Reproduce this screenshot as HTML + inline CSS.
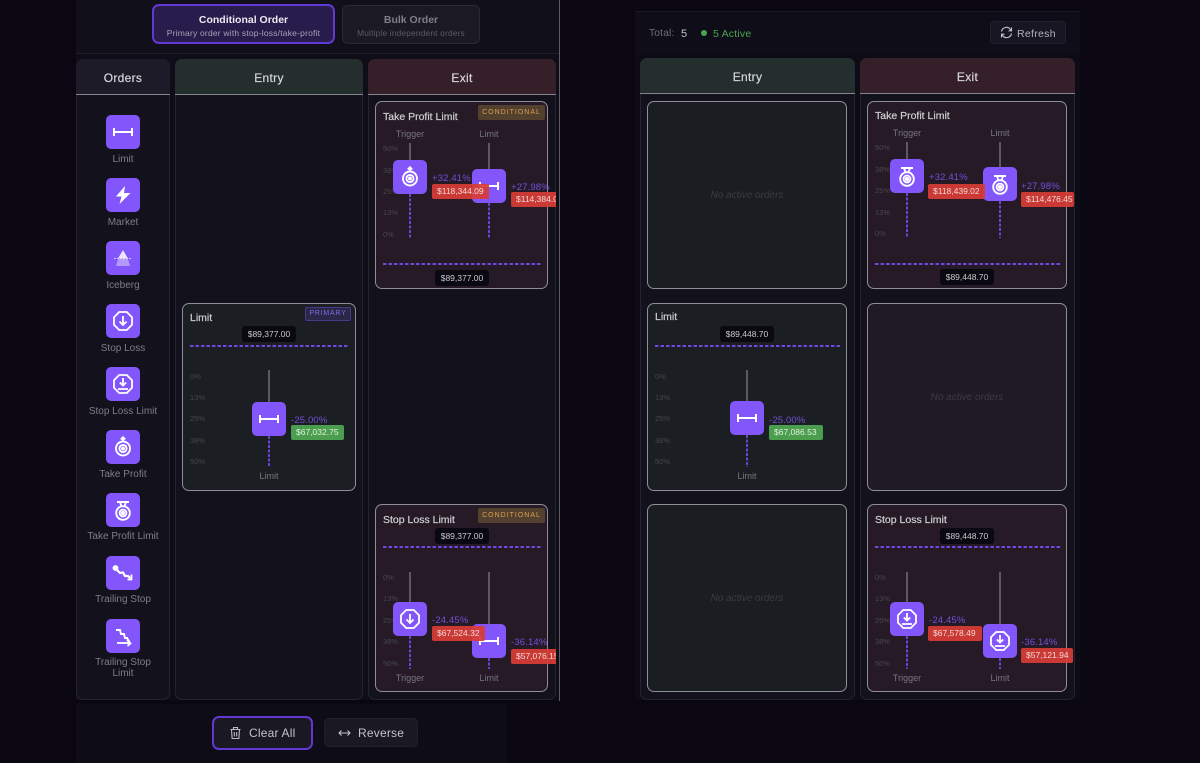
<!DOCTYPE html>
<html><head><meta charset="utf-8"><style>
html,body{margin:0;padding:0;width:1200px;height:763px;overflow:hidden;background:#0a0712;font-family:"Liberation Sans",sans-serif}
div,span,svg{position:absolute;box-sizing:border-box}
.t{white-space:nowrap;height:12px;line-height:12px;margin-top:1px}
.c{text-align:center}
.col{background:#13121c;border:1px solid #24232e;border-radius:7px}
.hd{height:36px;border-radius:7px 7px 0 0;border-bottom:1px solid #85848c;color:#d6d6da;font-size:12px;line-height:38px;text-align:center;letter-spacing:.3px;-webkit-text-stroke:.2px #d6d6da}
.card{border:1px solid #8f8e96;border-radius:7px}
.en{background:#1b1e22}.ex{background:#251a26}.ee{background:#1a1d21}.xe{background:#1f1a24}
.t.ti{color:#cfcfd3;font-size:10.500px;-webkit-text-stroke:.2px #cfcfd3;margin-top:2px}
.lb{color:#77767e;font-size:9px;text-align:center;width:60px}
.ax{color:#47474e;font-size:7.5px}
.t.ol{color:#7f7e87;font-size:10px;text-align:center;left:76px;width:94px;margin-top:2px}
.ib{width:34px;height:34px;background:#8256fa;border-radius:5px}
.ib svg{left:0;top:0;width:34px;height:34px}
.s{width:2px;background:#5a5960}
.d{width:2px;background:repeating-linear-gradient(180deg,#6a44d4 0 3px,transparent 3px 4.5px)}
.h{height:2px;background:repeating-linear-gradient(90deg,#6f49de 0 3.5px,transparent 3.5px 5.5px)}
.pill{width:54px;height:16px;background:#0a0810;border-radius:3px;color:#c9c9ce;font-size:8.5px;line-height:16px;text-align:center}
.pct{color:#7350d8;font-size:9.500px;letter-spacing:.15px}
.r,.g{height:15px;border-radius:2px;color:#efd9d6;font-size:8.5px;line-height:15px;padding-left:5px;white-space:nowrap;overflow:hidden}
.r{background:rgba(216,60,54,.93)}.g{background:#4a9e4d;color:#e2f0e2}
.cond{width:67px;height:15px;background:#54402f;border-radius:2px;color:#d9a04f;font-size:7px;line-height:15px;text-align:center;letter-spacing:1px}
.t.no{color:#3c3b43;font-size:10px;font-style:italic;text-align:center;margin-top:2px}
</style></head><body>
<svg width="0" height="0" style="left:0;top:0"><defs>
<g id="lim" fill="none" stroke="#fff" stroke-width="2"><path d="M8 17H26M8 13V21M26 13V21"/></g>
<g id="mkt" fill="#fff"><path d="M19 8 L10 18.5 H15.5 L13.5 26 L24.5 15 H18 Z"/></g>
<g id="ice"><path d="M17 9L22 17.5H12Z" fill="#fff" opacity=".85"/><path d="M8 17.5H26" stroke="#fff" stroke-width="1" stroke-dasharray="2 1" opacity=".7"/><path d="M12 18H22L24 25H10Z" fill="#fff" opacity=".4"/></g>
<g id="sl" fill="none" stroke="#fff" stroke-width="1.8"><path d="M13.200 8H20.800L26 13.200V20.800L20.800 26H13.200L8 20.800V13.200Z"/><path d="M17 12V21M13.500 17.500L17 21L20.500 17.500"/></g>
<g id="sll" fill="none" stroke="#fff" stroke-width="1.8"><path d="M13.200 8H20.800L26 13.200V20.800L20.800 26H13.200L8 20.800V13.200Z"/><path d="M17 11V18.500M13.800 15.500L17 18.500L20.200 15.500M12 22H22"/></g>
<g id="tp" fill="none" stroke="#fff" stroke-width="1.900"><circle cx="17" cy="18.500" r="7"/><circle cx="17" cy="18.500" r="3.600"/><circle cx="17" cy="18.500" r="1" fill="#fff"/><path d="M17 11.500V7.500M14.800 9.500L17 7.200L19.200 9.500"/></g>
<g id="tpl" fill="none" stroke="#fff" stroke-width="1.900"><circle cx="17" cy="20" r="6.800"/><circle cx="17" cy="20" r="3.400"/><circle cx="17" cy="20" r="1.200" fill="#fff"/><path d="M11 9H23M14 9L15.500 13.500M20 9L18.500 13.500"/></g>
<g id="ts" fill="none" stroke="#fff" stroke-width="2.200"><circle cx="9.500" cy="12" r="1.800" fill="#fff"/><path d="M10 13L14 17L17 16.500L19 20L22 20L25 23"/><path d="M25.500 18.500V23.500H21.500" stroke-width="1.800"/></g>
<g id="tsl" fill="none" stroke="#fff" stroke-width="1.900"><path d="M10 11H14L15 15H18L19 19H21L24 24"/><path d="M11 24H24M21 21L24.500 24.500L21.500 27" stroke-width="1.700"/></g>
<g id="trash" fill="none" stroke="#bdbcc2" stroke-width="1.100"><path d="M1 3.500H11M4 3.500V1.500H8V3.500M2 3.500L2.600 12.500H9.400L10 3.500M4.800 6V10.500M7.200 6V10.500"/></g>
<g id="ref" fill="none" stroke="#c5c4ca" stroke-width="1.100"><path d="M1.500 5.500A5 5 0 0 1 10.500 3.500L11.500 4.800M11.500 1.500V4.800H8.500M11.500 7.500A5 5 0 0 1 2.500 9.500L1.500 8.200M1.500 11.500V8.200H4.500"/></g>
<g id="rev" fill="none" stroke="#c4c3c9" stroke-width="1.100"><path d="M1 4H12M3.500 1.500L1 4L3.500 6.500M9.500 1.500L12 4L9.500 6.500"/></g>
</defs></svg>

<!-- left panel -->
<div style="left:76px;top:0;width:483px;height:700px;background:#0f0e18"></div>
<div style="left:76px;top:0;width:483px;height:54px;background:#100f1a;border-bottom:1px solid #1e1d28"></div>
<div style="left:559px;top:0;width:1px;height:701px;background:#5d5c63"></div>
<div style="left:152px;top:4px;width:183px;height:40px;background:#281c4c;border:2px solid #6238d4;border-radius:7px"></div>
<div class="t c" style="left:152px;top:13px;width:183px;color:#ecebf2;font-size:10.500px;font-weight:bold">Conditional Order</div>
<div class="t c" style="left:152px;top:26px;width:183px;color:#a6a3b4;font-size:8.500px;letter-spacing:.2px">Primary order with stop-loss/take-profit</div>
<div style="left:342px;top:5px;width:138px;height:39px;background:#1a1924;border:1px solid #2a2934;border-radius:6px"></div>
<div class="t c" style="left:342px;top:13px;width:138px;color:#807f88;font-size:10.500px;font-weight:bold">Bulk Order</div>
<div class="t c" style="left:342px;top:26px;width:138px;color:#5d5c66;font-size:8.300px;letter-spacing:.2px">Multiple independent orders</div>

<!-- Orders column -->
<div class="col" style="left:76px;top:59px;width:94px;height:641px"><div class="hd" style="left:-1px;top:-1px;width:94px;background:#1d1b28">Orders</div></div>
<div class="ib" style="left:106px;top:115px"><svg viewBox="0 0 34 34"><use href="#lim"/></svg></div><div class="t ol" style="top:152px">Limit</div>
<div class="ib" style="left:106px;top:178px"><svg viewBox="0 0 34 34"><use href="#mkt"/></svg></div><div class="t ol" style="top:215px">Market</div>
<div class="ib" style="left:106px;top:241px"><svg viewBox="0 0 34 34"><use href="#ice"/></svg></div><div class="t ol" style="top:278px">Iceberg</div>
<div class="ib" style="left:106px;top:304px"><svg viewBox="0 0 34 34"><use href="#sl"/></svg></div><div class="t ol" style="top:341px">Stop Loss</div>
<div class="ib" style="left:106px;top:367px"><svg viewBox="0 0 34 34"><use href="#sll"/></svg></div><div class="t ol" style="top:404px">Stop Loss Limit</div>
<div class="ib" style="left:106px;top:430px"><svg viewBox="0 0 34 34"><use href="#tp"/></svg></div><div class="t ol" style="top:467px">Take Profit</div>
<div class="ib" style="left:106px;top:493px"><svg viewBox="0 0 34 34"><use href="#tpl"/></svg></div><div class="t ol" style="top:529px">Take Profit Limit</div>
<div class="ib" style="left:106px;top:556px"><svg viewBox="0 0 34 34"><use href="#ts"/></svg></div><div class="t ol" style="top:592px">Trailing Stop</div>
<div class="ib" style="left:106px;top:619px"><svg viewBox="0 0 34 34"><use href="#tsl"/></svg></div><div class="t ol" style="top:655px">Trailing Stop</div><div class="t ol" style="top:666px">Limit</div>

<!-- Left Entry -->
<div class="col" style="left:175px;top:59px;width:188px;height:641px"><div class="hd" style="left:-1px;top:-1px;width:188px;background:#242e2c">Entry</div></div>
<div class="card en" style="left:182px;top:303px;width:174px;height:188px"></div>
<div class="t ti" style="left:190px;top:310px">Limit</div>
<div style="left:305px;top:307px;width:46px;height:14px;background:#2b2748;border:1px solid #443a88;border-radius:2px;color:#7c6ee8;font-size:7px;line-height:12px;text-align:center;letter-spacing:.8px">PRIMARY</div>
<div class="pill" style="left:242px;top:326px">$89,377.00</div>
<div class="h" style="left:190px;top:345px;width:159px"></div>
<div class="t ax" style="left:190px;top:370px">0%</div><div class="t ax" style="left:190px;top:391px">13%</div><div class="t ax" style="left:190px;top:412px">25%</div><div class="t ax" style="left:190px;top:434px">38%</div><div class="t ax" style="left:190px;top:455px">50%</div>
<div class="s" style="left:268px;top:370px;height:32px"></div><div class="d" style="left:268px;top:436px;height:31px"></div>
<div class="ib" style="left:252px;top:402px"><svg viewBox="0 0 34 34"><use href="#lim"/></svg></div>
<div class="t pct" style="left:291px;top:414px">-25.00%</div><div class="g" style="left:291px;top:425px;width:53px">$67,032.75</div>
<div class="t lb" style="left:239px;top:469px">Limit</div>

<!-- Left Exit -->
<div class="col" style="left:368px;top:59px;width:188px;height:641px"><div class="hd" style="left:-1px;top:-1px;width:188px;background:#35202a">Exit</div></div>
<div class="card ex" style="left:375px;top:101px;width:173px;height:188px"></div>
<div class="t ti" style="left:383px;top:109px">Take Profit Limit</div>
<div class="cond" style="left:478px;top:105px">CONDITIONAL</div>
<div class="t lb" style="left:380px;top:127px">Trigger</div><div class="t lb" style="left:459px;top:127px">Limit</div>
<div class="t ax" style="left:383px;top:142px">50%</div><div class="t ax" style="left:383px;top:164px">38%</div><div class="t ax" style="left:383px;top:185px">25%</div><div class="t ax" style="left:383px;top:206px">13%</div><div class="t ax" style="left:383px;top:228px">0%</div>
<div class="s" style="left:409px;top:143px;height:18px"></div><div class="d" style="left:409px;top:194px;height:45px"></div>
<div class="ib" style="left:393px;top:160px"><svg viewBox="0 0 34 34"><use href="#tp"/></svg></div>
<div class="s" style="left:488px;top:143px;height:26px"></div><div class="d" style="left:488px;top:203px;height:36px"></div>
<div class="ib" style="left:472px;top:168.500px"><svg viewBox="0 0 34 34"><use href="#lim"/></svg></div>
<div class="t pct" style="left:432px;top:172px">+32.41%</div><div class="r" style="left:432px;top:184px;width:57px">$118,344.09</div>
<div class="t pct" style="left:511px;top:181px">+27.98%</div><div class="r" style="left:511px;top:192px;width:45px;border-radius:2px 0 0 2px">$114,384.09</div>
<div class="h" style="left:383px;top:263px;width:159px"></div>
<div class="pill" style="left:435px;top:270px">$89,377.00</div>

<div class="card ex" style="left:375px;top:504px;width:173px;height:188px"></div>
<div class="t ti" style="left:383px;top:512px">Stop Loss Limit</div>
<div class="cond" style="left:478px;top:508px">CONDITIONAL</div>
<div class="pill" style="left:435px;top:528px">$89,377.00</div>
<div class="h" style="left:383px;top:546px;width:159px"></div>
<div class="t ax" style="left:383px;top:571px">0%</div><div class="t ax" style="left:383px;top:592px">13%</div><div class="t ax" style="left:383px;top:614px">25%</div><div class="t ax" style="left:383px;top:635px">38%</div><div class="t ax" style="left:383px;top:657px">50%</div>
<div class="s" style="left:409px;top:572px;height:31px"></div><div class="d" style="left:409px;top:636px;height:33px"></div>
<div class="ib" style="left:393px;top:602px"><svg viewBox="0 0 34 34"><use href="#sl"/></svg></div>
<div class="s" style="left:488px;top:572px;height:53px"></div><div class="d" style="left:488px;top:658px;height:11px"></div>
<div class="ib" style="left:472px;top:624px"><svg viewBox="0 0 34 34"><use href="#lim"/></svg></div>
<div class="t pct" style="left:432px;top:614px">-24.45%</div><div class="r" style="left:432px;top:626px;width:53px">$67,524.32</div>
<div class="t pct" style="left:511px;top:636px">-36.14%</div><div class="r" style="left:511px;top:649px;width:45px;border-radius:2px 0 0 2px">$57,076.15</div>
<div class="t lb" style="left:380px;top:671px">Trigger</div><div class="t lb" style="left:459px;top:671px">Limit</div>

<!-- Bottom bar -->
<div style="left:76px;top:704px;width:431px;height:59px;background:#0e0c16"></div>
<div style="left:212px;top:716px;width:101px;height:34px;background:#191823;border:2px solid #6238d4;border-radius:7px"></div>
<svg style="left:229px;top:726px;width:13px;height:14px" viewBox="0 0 12 14"><use href="#trash"/></svg>
<div class="t" style="left:249px;top:726px;color:#c4c3c9;font-size:12px;letter-spacing:.2px">Clear All</div>
<div style="left:324px;top:718px;width:94px;height:29px;background:#191823;border:1px solid #201f2a;border-radius:5px"></div>
<svg style="left:338px;top:729px;width:13px;height:8px" viewBox="0 0 13 8"><use href="#rev"/></svg>
<div class="t" style="left:358px;top:726px;color:#c4c3c9;font-size:12px;letter-spacing:.2px">Reverse</div>

<!-- Right panel -->
<div style="left:635px;top:11px;width:445px;height:689px;background:#0d0c16"></div>
<div style="left:635px;top:11px;width:445px;height:43px;background:#0f0e18;border-top:1px solid #1a1924"></div>
<div class="t" style="left:649px;top:27px;color:#6f6e77;font-size:10.200px;letter-spacing:.2px">Total:</div>
<div class="t" style="left:681px;top:27px;color:#c2c1c7;font-size:11px">5</div>
<div style="left:701px;top:30px;width:6px;height:6px;border-radius:50%;background:#4aa54e"></div>
<div class="t" style="left:713px;top:27px;color:#4aa54e;font-size:10.500px;letter-spacing:.2px">5 Active</div>
<div style="left:990px;top:21px;width:76px;height:23px;background:#171622;border:1px solid #201f2b;border-radius:4px"></div>
<svg style="left:1000px;top:26px;width:13px;height:13px" viewBox="0 0 13 13"><use href="#ref"/></svg>
<div class="t" style="left:1017px;top:27px;color:#b5b4ba;font-size:10.500px;letter-spacing:.3px">Refresh</div>

<div class="col" style="left:640px;top:58px;width:215px;height:642px"><div class="hd" style="left:-1px;top:-1px;width:215px;background:#242e2c">Entry</div></div>
<div class="col" style="left:860px;top:58px;width:215px;height:642px"><div class="hd" style="left:-1px;top:-1px;width:215px;background:#35202a">Exit</div></div>

<div class="card ee" style="left:647px;top:101px;width:200px;height:188px"></div>
<div class="t no" style="left:647px;top:188px;width:200px">No active orders</div>
<div class="card en" style="left:647px;top:303px;width:200px;height:188px"></div>
<div class="t ti" style="left:655px;top:309px">Limit</div>
<div class="pill" style="left:720px;top:326px">$89,448.70</div>
<div class="h" style="left:655px;top:345px;width:186px"></div>
<div class="t ax" style="left:655px;top:370px">0%</div><div class="t ax" style="left:655px;top:391px">13%</div><div class="t ax" style="left:655px;top:412px">25%</div><div class="t ax" style="left:655px;top:434px">38%</div><div class="t ax" style="left:655px;top:455px">50%</div>
<div class="s" style="left:746px;top:370px;height:32px"></div><div class="d" style="left:746px;top:435px;height:32px"></div>
<div class="ib" style="left:730px;top:401px"><svg viewBox="0 0 34 34"><use href="#lim"/></svg></div>
<div class="t pct" style="left:769px;top:414px">-25.00%</div><div class="g" style="left:769px;top:425px;width:54px">$67,086.53</div>
<div class="t lb" style="left:717px;top:469px">Limit</div>
<div class="card ee" style="left:647px;top:504px;width:200px;height:188px"></div>
<div class="t no" style="left:647px;top:591px;width:200px">No active orders</div>

<div class="card ex" style="left:867px;top:101px;width:200px;height:188px"></div>
<div class="t ti" style="left:875px;top:108px">Take Profit Limit</div>
<div class="t lb" style="left:877px;top:126px">Trigger</div><div class="t lb" style="left:970px;top:126px">Limit</div>
<div class="t ax" style="left:875px;top:141px">50%</div><div class="t ax" style="left:875px;top:163px">38%</div><div class="t ax" style="left:875px;top:184px">25%</div><div class="t ax" style="left:875px;top:206px">13%</div><div class="t ax" style="left:875px;top:227px">0%</div>
<div class="s" style="left:906px;top:142px;height:18px"></div><div class="d" style="left:906px;top:193px;height:45px"></div>
<div class="ib" style="left:890px;top:159px"><svg viewBox="0 0 34 34"><use href="#tpl"/></svg></div>
<div class="s" style="left:999px;top:142px;height:26px"></div><div class="d" style="left:999px;top:201px;height:37px"></div>
<div class="ib" style="left:983px;top:167px"><svg viewBox="0 0 34 34"><use href="#tpl"/></svg></div>
<div class="t pct" style="left:929px;top:171px">+32.41%</div><div class="r" style="left:928px;top:183.500px;width:57px">$118,439.02</div>
<div class="t pct" style="left:1021px;top:180px">+27.98%</div><div class="r" style="left:1021px;top:191.500px;width:53px">$114,476.45</div>
<div class="h" style="left:875px;top:263px;width:186px"></div>
<div class="pill" style="left:940px;top:269px">$89,448.70</div>

<div class="card xe" style="left:867px;top:303px;width:200px;height:188px"></div>
<div class="t no" style="left:867px;top:390px;width:200px">No active orders</div>

<div class="card ex" style="left:867px;top:504px;width:200px;height:188px"></div>
<div class="t ti" style="left:875px;top:512px">Stop Loss Limit</div>
<div class="pill" style="left:940px;top:528px">$89,448.70</div>
<div class="h" style="left:875px;top:546px;width:186px"></div>
<div class="t ax" style="left:875px;top:571px">0%</div><div class="t ax" style="left:875px;top:592px">13%</div><div class="t ax" style="left:875px;top:614px">25%</div><div class="t ax" style="left:875px;top:635px">38%</div><div class="t ax" style="left:875px;top:657px">50%</div>
<div class="s" style="left:906px;top:572px;height:30px"></div><div class="d" style="left:906px;top:636px;height:33px"></div>
<div class="ib" style="left:890px;top:602px"><svg viewBox="0 0 34 34"><use href="#sll"/></svg></div>
<div class="s" style="left:999px;top:572px;height:53px"></div><div class="d" style="left:999px;top:658px;height:11px"></div>
<div class="ib" style="left:983px;top:624px"><svg viewBox="0 0 34 34"><use href="#sll"/></svg></div>
<div class="t pct" style="left:929px;top:614px">-24.45%</div><div class="r" style="left:928px;top:626px;width:54px">$67,578.49</div>
<div class="t pct" style="left:1021px;top:636px">-36.14%</div><div class="r" style="left:1021px;top:648px;width:52px">$57,121.94</div>
<div class="t lb" style="left:877px;top:671px">Trigger</div><div class="t lb" style="left:970px;top:671px">Limit</div>
</body></html>
